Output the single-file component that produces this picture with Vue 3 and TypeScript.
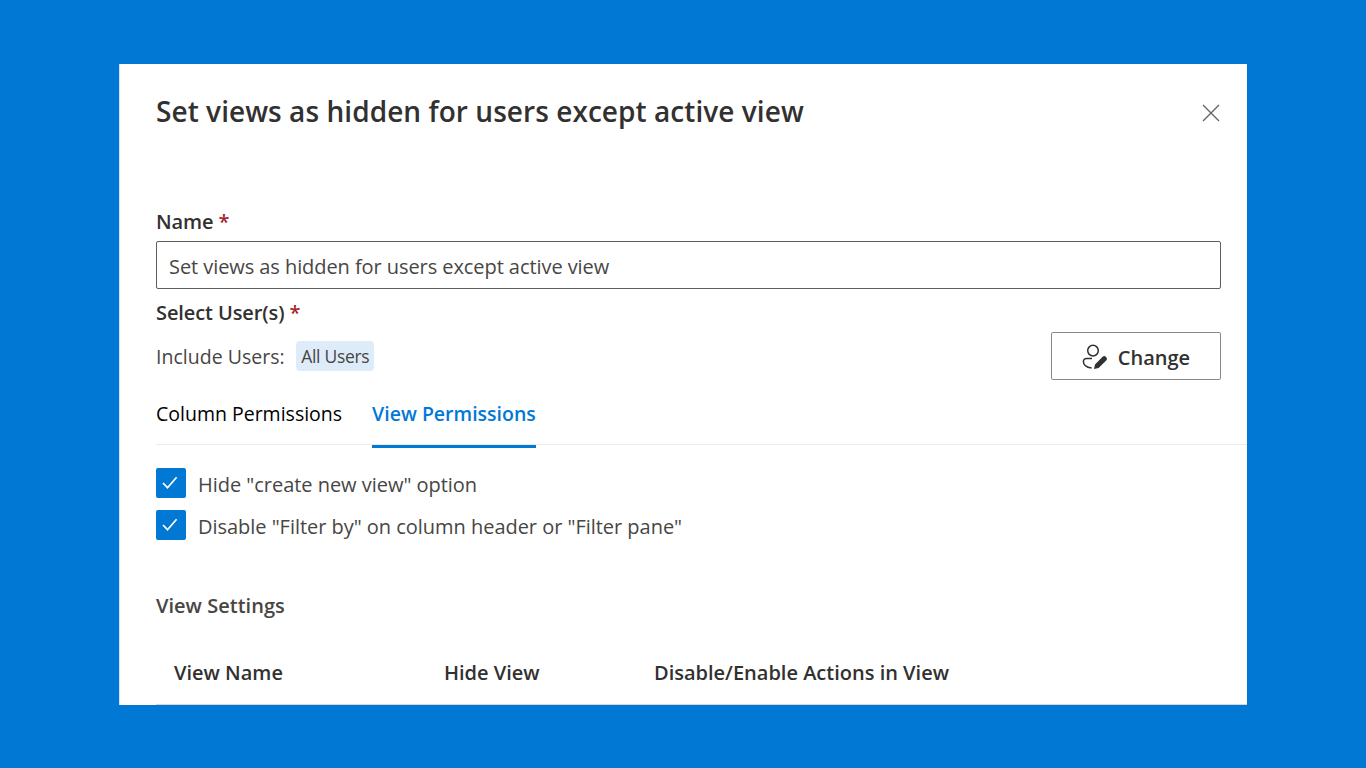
<script setup lang="ts">
const columns = [
  { label: 'View Name', width: '270px' },
  { label: 'Hide View', width: '210px' },
  { label: 'Disable/Enable Actions in View', width: 'auto' },
]
const options = [
  'Hide "create new view" option',
  'Disable "Filter by" on column header or "Filter pane"',
]
</script>

<template>
  <div class="page">
    <section class="modal">
      <header class="head">
        <h1 class="title">Set views as hidden for users except active view</h1>
        <button class="close" aria-label="Close">
          <svg width="20" height="20" viewBox="0 0 20 20"><path d="M2 2 18 18M18 2 2 18" stroke="#616161" stroke-width="1.3" fill="none" /></svg>
        </button>
      </header>

      <div class="body">
        <label class="label name-label">Name <span class="req">*</span></label>
        <div class="input">Set views as hidden for users except active view</div>
        <div class="label users-label">Select User(s) <span class="req">*</span></div>

        <div class="users-row">
          <div class="include">
            <span>Include Users:</span>
            <span class="chip">All Users</span>
          </div>
          <button class="change">
            <svg class="change-icon" width="26" height="26" viewBox="0 0 26 26">
              <circle cx="11" cy="6.6" r="5.3" fill="none" stroke="#323130" stroke-width="1.5" />
              <path d="M10 14.4H4.6C2.8 14.4 1.4 15.6 1.4 17.5C1.4 20.8 4.6 23.4 9.6 24" fill="none" stroke="#323130" stroke-width="1.5" />
              <path d="M12 25 13 20.4 20.6 12.8C21.6 11.8 22.7 11.8 23.6 12.6L24.4 13.4C25.2 14.3 25.2 15.4 24.2 16.4L16.6 24Z" fill="#323130" />
            </svg>
            <span>Change</span>
          </button>
        </div>

        <nav class="tabs">
          <span class="tab">Column Permissions</span>
          <span class="tab active">View Permissions</span>
        </nav>

        <div class="options">
          <div v-for="o in options" :key="o" class="option">
            <span class="check">
              <svg width="30" height="30" viewBox="0 0 30 30"><path d="M7 15 11.5 19.7 20.6 9.2" fill="none" stroke="#fff" stroke-width="1.7" /></svg>
            </span>
            <span class="option-text">{{ o }}</span>
          </div>
        </div>

        <div class="settings">View Settings</div>

        <div class="table-head">
          <div v-for="c in columns" :key="c.label" class="cell" :style="{ width: c.width }">{{ c.label }}</div>
        </div>
      </div>
    </section>
  </div>
</template>

<style>
html, body { margin: 0; background: #0078d4; }
</style>

<style scoped>
.page {
  width: 1366px;
  height: 768px;
  background: #0078d4;
  padding: 64px 119px 63px;
  box-sizing: border-box;
  font-family: "Open Sans", "Noto Sans", sans-serif;
  color: #323130;
  overflow: hidden;
}
.modal {
  width: 1128px;
  height: 641px;
  background: #fff;
  overflow: hidden;
  box-sizing: border-box;
  display: flex;
  flex-direction: column;
  border-left: 1px solid #cfe4f6;
}
.head {
  display: flex;
  justify-content: space-between;
  align-items: center;
  padding: 30px 26px 0 36px;
  height: 68px;
  box-sizing: border-box;
  flex: none;
}
.title {
  margin: 0 0 4px;
  font-size: 28px;
  font-weight: 600;
  line-height: 40px;
  letter-spacing: 0.06px;
}
.close {
  width: 20px;
  height: 20px;
  padding: 0;
  border: 0;
  background: none;
  display: flex;
}
.body {
  padding: 76px 0 0 36px;
  font-size: 20px;
}
.label {
  display: block;
  font-size: 20px;
  font-weight: 600;
  line-height: 28px;
  letter-spacing: -0.1px;
}
.req { color: #a4262c; }
.input {
  width: 1065px;
  height: 48px;
  box-sizing: border-box;
  margin-top: 5px;
  border: 1px solid #605e5c;
  border-radius: 2px;
  padding: 2px 12px 0;
  line-height: 46px;
  font-size: 20px;
  letter-spacing: -0.07px;
  color: #484644;
}
.users-label { margin-top: 10px; }
.users-row {
  width: 1065px;
  display: flex;
  justify-content: space-between;
  align-items: center;
  margin-top: 5px;
}
.include {
  display: flex;
  align-items: center;
  gap: 11.5px;
  font-size: 19.5px;
  letter-spacing: 0.02px;
  color: #484644;
}
.chip {
  background: #deecf9;
  border-radius: 4px;
  padding: 0 5px;
  height: 30px;
  line-height: 30px;
  font-size: 17.5px;
  letter-spacing: -0.3px;
}
.change {
  width: 170px;
  height: 48px;
  border: 1px solid #8a8886;
  border-radius: 2px;
  background: #fff;
  display: flex;
  align-items: center;
  justify-content: center;
  gap: 10px;
  font: 600 20px/30px "Open Sans", sans-serif;
  color: #323130;
  padding: 3px 0 0;
}
.change-icon { margin-top: -2px; }
.tabs {
  display: flex;
  gap: 30px;
  height: 65px;
  border-bottom: 1px solid #edebe9;
  box-sizing: border-box;
}
.tab {
  font-size: 19.5px;
  line-height: 68px;
  color: #000;
  height: 68px;
}
.tab.active {
  color: #0078d4;
  font-weight: 600;
  border-bottom: 3px solid #0078d4;
  box-sizing: border-box;
}
.options {
  margin-top: 23px;
  display: flex;
  flex-direction: column;
  gap: 12px;
}
.option {
  display: flex;
  align-items: center;
  gap: 12px;
  font-size: 20px;
  letter-spacing: -0.03px;
  color: #484644;
  height: 30px;
}
.option-text { padding-top: 2px; }
.check {
  width: 30px;
  height: 30px;
  background: #0078d4;
  border-radius: 2px;
  display: flex;
  align-items: center;
  justify-content: center;
}
.settings {
  margin-top: 52px;
  font-size: 20px;
  font-weight: 600;
  line-height: 28px;
  letter-spacing: 0.02px;
  color: #484644;
}
.table-head {
  display: flex;
  margin-top: 21px;
  height: 64px;
  box-sizing: border-box;
  border-bottom: 1px solid #d6d6d6;
  padding-left: 18px;
}
.cell {
  flex: none;
  font-size: 20px;
  font-weight: 600;
  line-height: 64px;
  height: 63px;
  overflow: visible;
  white-space: nowrap;
}
</style>
